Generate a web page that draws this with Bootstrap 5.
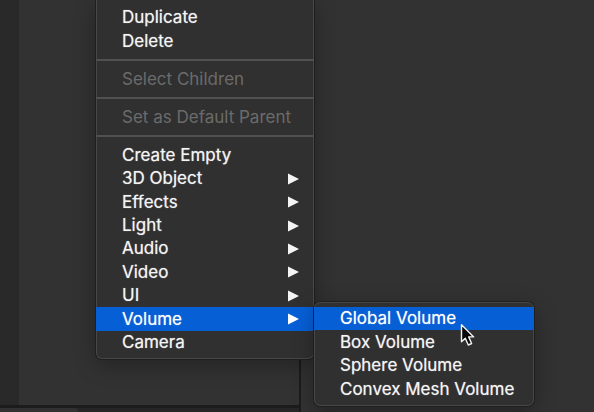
<!DOCTYPE html>
<html lang="en">
<head>
<meta charset="utf-8">
<meta name="viewport" content="width=device-width, initial-scale=1">
<title>Hierarchy context menu</title>
<link rel="stylesheet" href="https://cdn.jsdelivr.net/npm/bootstrap@5.3.0/dist/css/bootstrap.min.css">
<style>
body { background: #1c1c1c; font-family: Inter, Roboto, "Liberation Sans", sans-serif; }
.editor { gap: 2px; }
.left-side { flex: 0 0 50.3%; }
.gutter { width: 19px; background: #292929; }
.pane { background: #323232; }
.dock { height: 4px; margin-top: 3px; background: #262626; }
.dock-tab { width: 78px; background: #323232; border-top-right-radius: 3px; }
.ctx { background: #303030; border: 1px solid #474747; border-radius: 6px; box-shadow: 0 0 0 1px #1f1f1f, 0 6px 22px rgba(0,0,0,.3); }
.ctx-main { top: 0; left: 96px; width: 218px; padding: 6px 0 4px; border-top: 0; border-top-left-radius: 0; border-top-right-radius: 0; }
.ctx-sub { left: 100%; bottom: -75px; width: 220px; padding: 4px 0 4px; z-index: 2; }
.ctx-group { display: flex; flex-direction: column; margin: 0 -1px; }
.g2 { height: 47px; }
.g9 { height: 211px; }
.g4 { height: 94px; }
.ctx-row { flex: 1 1 0; min-height: 0; position: relative; }
.g1 .ctx-row { flex: none; height: 24px; }
.ctx-btn { display: flex; align-items: center; justify-content: space-between; width: 100%; height: 100%; padding: 0 15px 0 26px; border: 0; background: transparent; color: #f4f4f4; font-size: 17px; line-height: 23px; text-align: left; text-shadow: 0 0 1px rgba(255,255,255,.6); white-space: nowrap; }
.g9 .ctx-btn { padding-top: 1px; }
.ctx-btn:disabled { color: #6b6b6b; text-shadow: none; }
.ctx-btn.chosen { background: #075fd6; color: #fff; }
.ctx-line { height: 2px; margin: 6px -1px; border: 0; background: #505050; opacity: 1; }
.pointer { left: 146px; top: 16px; z-index: 3; pointer-events: none; }
</style>
<script src="https://cdn.jsdelivr.net/npm/bootstrap@5.3.0/dist/js/bootstrap.bundle.min.js"></script>
</head>
<body class="vh-100 overflow-hidden position-relative">
<svg class="d-none" aria-hidden="true"><symbol id="arrow" viewBox="0 0 11 12"><path d="M0 .5v11L11 6z" fill="currentColor"/></symbol></svg>
<div class="editor d-flex h-100">
  <div class="left-side d-flex flex-column">
    <div class="d-flex flex-fill"><div class="gutter"></div><div class="pane flex-fill"></div></div>
    <div class="dock d-flex"><div class="dock-tab"></div></div>
  </div>
  <div class="pane flex-fill"></div>
</div>

<nav class="ctx ctx-main position-absolute" aria-label="Context menu">
  <ul class="ctx-group g2 list-unstyled mb-0">
    <li class="ctx-row"><button type="button" class="ctx-btn">Duplicate</button></li>
    <li class="ctx-row"><button type="button" class="ctx-btn">Delete</button></li>
  </ul>
  <hr class="ctx-line">
  <ul class="ctx-group g1 list-unstyled mb-0">
    <li class="ctx-row"><button type="button" class="ctx-btn" disabled>Select Children</button></li>
  </ul>
  <hr class="ctx-line">
  <ul class="ctx-group g1 list-unstyled mb-0">
    <li class="ctx-row"><button type="button" class="ctx-btn" disabled>Set as Default Parent</button></li>
  </ul>
  <hr class="ctx-line">
  <ul class="ctx-group g9 list-unstyled mb-0">
    <li class="ctx-row"><button type="button" class="ctx-btn">Create Empty</button></li>
    <li class="ctx-row"><button type="button" class="ctx-btn">3D Object <svg width="11" height="12"><use href="#arrow"/></svg></button></li>
    <li class="ctx-row"><button type="button" class="ctx-btn">Effects <svg width="11" height="12"><use href="#arrow"/></svg></button></li>
    <li class="ctx-row"><button type="button" class="ctx-btn">Light <svg width="11" height="12"><use href="#arrow"/></svg></button></li>
    <li class="ctx-row"><button type="button" class="ctx-btn">Audio <svg width="11" height="12"><use href="#arrow"/></svg></button></li>
    <li class="ctx-row"><button type="button" class="ctx-btn">Video <svg width="11" height="12"><use href="#arrow"/></svg></button></li>
    <li class="ctx-row"><button type="button" class="ctx-btn">UI <svg width="11" height="12"><use href="#arrow"/></svg></button></li>
    <li class="ctx-row"><button type="button" class="ctx-btn chosen" aria-expanded="true">Volume <svg width="11" height="12"><use href="#arrow"/></svg></button>
      <div class="ctx ctx-sub position-absolute">
        <ul class="ctx-group g4 list-unstyled mb-0">
          <li class="ctx-row"><button type="button" class="ctx-btn chosen">Global Volume</button>
            <svg class="pointer position-absolute" width="15" height="24" viewBox="0 0 15 24" aria-hidden="true"><path d="M1.5 1.8v17l3.8-3.6 3 6.8 3.3-1.5-2.9-6.6h5z" fill="#080808" stroke="#f2f2f2" stroke-width="1.4" stroke-linejoin="round"/></svg>
          </li>
          <li class="ctx-row"><button type="button" class="ctx-btn">Box Volume</button></li>
          <li class="ctx-row"><button type="button" class="ctx-btn">Sphere Volume</button></li>
          <li class="ctx-row"><button type="button" class="ctx-btn">Convex Mesh Volume</button></li>
        </ul>
      </div>
    </li>
    <li class="ctx-row"><button type="button" class="ctx-btn">Camera</button></li>
  </ul>
</nav>
</body>
</html>
